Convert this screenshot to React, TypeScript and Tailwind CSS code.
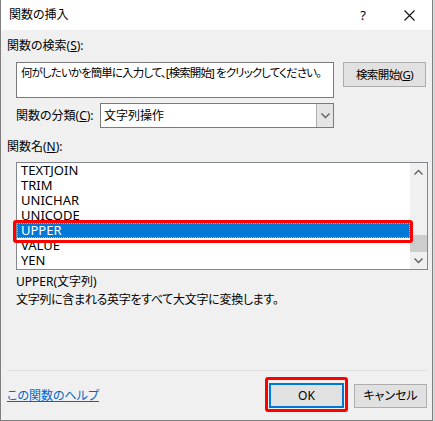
import React from 'react';

const FUNCS = ['TEXTJOIN', 'TRIM', 'UNICHAR', 'UNICODE', 'UPPER', 'VALUE', 'YEN'];
const SELECTED = 'UPPER';

function Chevron({ dir }: { dir: 'up' | 'down' }) {
  return (
    <svg width="9" height="6" viewBox="0 0 9 6" className="block">
      <path
        d={dir === 'up' ? 'M0.5 5.5 L4.5 1.5 L8.5 5.5' : 'M0.5 0.5 L4.5 4.5 L8.5 0.5'}
        fill="none"
        stroke="#606060"
        strokeWidth="1.4"
      />
    </svg>
  );
}

export default function App() {
  return (
    <div className="w-[435px] h-[421px] bg-[#d8d8d8] overflow-hidden text-[12px] leading-[16px] text-black [font-family:'Noto_Sans','Noto_Sans_CJK_JP',sans-serif] [font-feature-settings:'palt']">
      <div className="w-[433px] h-[421px] bg-[#f0f0f0] border-x border-b border-[#7f7f7f] flex flex-col">
        {/* Title bar */}
        <div className="h-[30px] bg-white flex items-center shrink-0">
          <span className="pl-[8px] flex-1">関数の挿入</span>
          <div className="w-[46px] h-full flex items-center justify-center text-[13px]">?</div>
          <div className="w-[46px] h-full flex items-center justify-center">
            <svg width="11" height="11" viewBox="0 0 11 11">
              <path d="M0.5 0.5 L10.5 10.5 M10.5 0.5 L0.5 10.5" stroke="#111" strokeWidth="1.1" />
            </svg>
          </div>
        </div>

        <div className="flex-1 flex flex-col pl-[6px] pr-[5px] pt-[8px]">
          <div>
            関数の検索(<span className="underline">S</span>):
          </div>

          {/* Search row */}
          <div className="flex gap-[9px] mt-[8px] ml-[9px]">
            <div className="w-[318px] h-[36px] bg-white border border-[#7a7a7a] pl-[4px] pt-[2px] whitespace-nowrap overflow-hidden text-[11.5px] tracking-[-0.9px]">
              何がしたいかを簡単に入力して、[検索開始] をクリックしてください。
            </div>
            <button className="w-[83px] h-[25px] bg-[#e1e1e1] border border-[#adadad] flex items-center justify-center text-[11.5px] tracking-[-0.6px] whitespace-nowrap">
              検索開始(<span className="underline">G</span>)
            </button>
          </div>

          {/* Category row */}
          <div className="flex items-center mt-[5px] ml-[9px]">
            <span className="w-[84px]">
              関数の分類(<span className="underline">C</span>):
            </span>
            <div className="w-[234px] h-[25px] bg-white border border-[#7a7a7a] flex items-center">
              <span className="flex-1 pl-[3px]">文字列操作</span>
              <div className="w-[17px] h-full bg-[#e5e5e5] border-l border-[#adadad] flex items-center justify-center">
                <Chevron dir="down" />
              </div>
            </div>
          </div>

          <div className="mt-[11px]">
            関数名(<span className="underline">N</span>):
          </div>

          {/* Function list */}
          <div className="relative mt-[7px] ml-[9px] w-[412px] h-[108px] bg-white border border-[#828790] flex text-[13px]">
            <div className="flex-1">
              {FUNCS.map(name => (
                <div
                  key={name}
                  className={
                    name === SELECTED
                      ? 'h-[15px] leading-[13px] bg-[#0078d7] text-white border border-dotted border-[#f3a64f] pl-[3px]'
                      : 'h-[15px] leading-[15px] pl-[4px]'
                  }
                >
                  {name}
                </div>
              ))}
            </div>
            <div className="w-[17px] h-full bg-[#f0f0f0] flex flex-col">
              <div className="h-[17px] flex items-center justify-center">
                <Chevron dir="up" />
              </div>
              <div className="flex-1">
                <div className="h-[17px] bg-[#cdcdcd] mt-[55px]" />
              </div>
              <div className="h-[17px] flex items-center justify-center">
                <Chevron dir="down" />
              </div>
            </div>
            {/* highlight ring */}
            <div className="absolute left-[-4px] top-[57px] w-[400px] h-[23px] border-[3px] border-[#ff0000] rounded-[3px] pointer-events-none" />
          </div>

          <div className="mt-[4px] ml-[9px]">UPPER(文字列)</div>
          <div className="mt-[2px] ml-[9px] tracking-[-0.3px]">文字列に含まれる英字をすべて大文字に変換します。</div>

          <div className="flex-1" />

          <div className="h-px bg-[#dfdfdf]" />

          {/* Footer */}
          <div className="h-[49px] flex items-center">
            <span className="flex-1 text-[#0066cc] underline">この関数のヘルプ</span>
            <div className="relative mr-[10px]">
              <div className="absolute -inset-[4px] -top-[6px] border-[3px] border-[#ff0000] rounded-[3px]" />
              <button className="w-[75px] h-[25px] bg-[#e1e1e1] border-2 border-[#0078d7] flex items-center justify-center">
                OK
              </button>
            </div>
            <button className="w-[73px] h-[24px] bg-[#e1e1e1] border border-[#adadad] flex items-center justify-center">
              キャンセル
            </button>
          </div>
        </div>
      </div>
    </div>
  );
}
